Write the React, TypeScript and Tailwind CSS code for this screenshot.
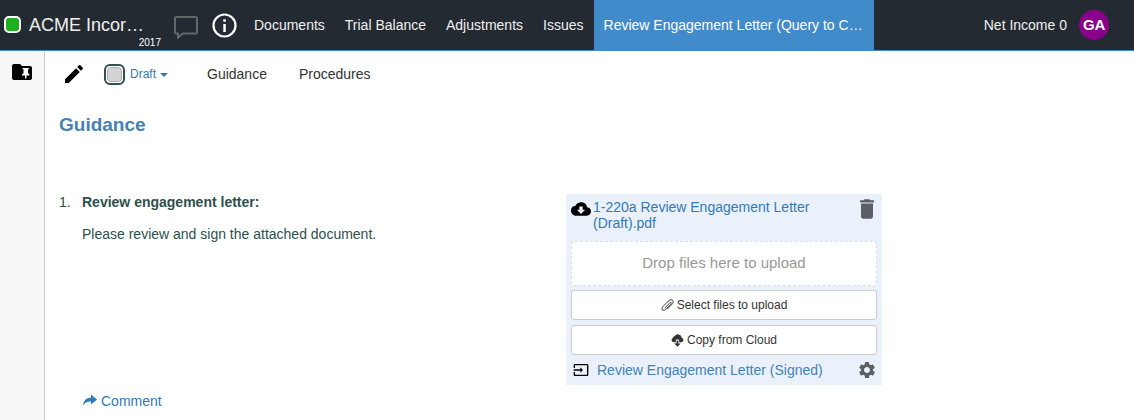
import React from "react";
import { MdEdit, MdCloudDownload, MdDelete, MdSettings, MdInput } from "react-icons/md";

const navItems = ["Documents", "Trial Balance", "Adjustments", "Issues"];

function ChatIcon() {
  return (
    <svg className="mt-[15px] ml-[29px] h-[25px] w-[26px] shrink-0" viewBox="0 0 26 25" fill="none" stroke="#62676b" strokeWidth="2">
      <path d="M3 2H22.500Q24 2 24 3.500V17Q24 18.500 22.500 18.500H10L5 22.500V18.500H3.500Q2 18.500 2 17V3.500Q2 2 3 2Z" />
    </svg>
  );
}

function InfoIcon() {
  return (
    <svg className="mt-[13px] ml-[13px] h-[25px] w-[25px] shrink-0" viewBox="0 0 25 25" fill="none">
      <circle cx="12.500" cy="12.500" r="11" stroke="#fff" strokeWidth="2.200" />
      <path d="M11.300 6.300h2.500v2.500h-2.500zM11.300 11h2.500v8h-2.500z" fill="#fff" />
    </svg>
  );
}

function FolderPinIcon() {
  return (
    <svg className="h-4 w-5" viewBox="0 0 20 16">
      <path d="M2 0H8L10 2H18Q20 2 20 4V14Q20 16 18 16H2Q0 16 0 14V2Q0 0 2 0Z" fill="#000" />
      <path d="M10.500 4H17V5.200H16V9L17.500 10.500V11.500H14.500V14L13.800 15L13.100 14V11.500H10V10.500L11.500 9V5.200H10.500Z" fill="#fff" />
    </svg>
  );
}

function PaperclipIcon() {
  return (
    <svg className="h-[13px] w-[13px]" viewBox="0 0 13 13" fill="none" stroke="#333" strokeWidth=".9" strokeLinecap="round">
      <path d="M4 8.800L8.800 4Q9.700 3.200 10.200 3.700Q10.700 4.300 9.900 5.200L5 10.100Q3.200 12.200 1.500 11.100Q.2 9.700 1.800 7.600L7.300 2.100Q9.600 0 11.400 1Q13 2.300 11.600 4.600L6.500 9.800" />
    </svg>
  );
}

function CloudArrowIcon() {
  return (
    <svg className="h-[13px] w-[13px]" viewBox="0 0 13 13" fill="#333">
      <path d="M3 8.200H4.800V5.500H8.100V8.200H10.200A2.300 2.300 0 0 0 10.700 3.700A3.800 3.800 0 0 0 3.600 2.300A1.800 1.800 0 0 0 1.900 4A2.200 2.200 0 0 0 3 8.200Z" />
      <path d="M5.500 6.400H7.400V9.500H9.700L6.450 12.700L3.200 9.500H5.500Z" />
    </svg>
  );
}

function ReplyArrowIcon() {
  return (
    <svg className="-mt-[2px] h-3 w-[14px]" viewBox="0 0 14 12" fill="#337ab7">
      <path d="M8 .5L14 5.500L8 10.500V7.600C4.300 7.400 1.800 8.600 .2 11.500C.4 6.600 3.400 3.600 8 3.400Z" />
    </svg>
  );
}

function Header() {
  return (
    <header className="flex h-[51px] border-b border-[#428bca] bg-[#232a31] text-[14px] leading-5 text-[#f0f0f0]">
      <div className="mt-4 ml-1 h-[17px] w-[17px] shrink-0 rounded-[5px] border-2 border-white bg-[#20ad20]" />
      <div className="ml-2 w-[115px] shrink-0 pt-[13px]">
        <div className="text-[18px] leading-6 whitespace-nowrap">ACME Incor…</div>
        <div className="-mr-[17px] text-right text-[10px] leading-[11px] text-white">2017</div>
      </div>
      <ChatIcon />
      <InfoIcon />
      <nav className="ml-[7px] flex">
        {navItems.map((item) => (
          <a key={item} className="px-[10px] pt-[15px] whitespace-nowrap">{item}</a>
        ))}
        <a className="h-[51px] w-[280px] truncate bg-[#428bca] px-[10px] pt-[15px] text-white">
          Review Engagement Letter (Query to C…
        </a>
      </nav>
      <div className="ml-auto flex pr-[25px]">
        <span className="pt-[15px]">Net Income 0</span>
        <span className="mt-[10px] ml-3 flex h-[30px] w-[30px] items-center justify-center rounded-full bg-[#8b008b] text-[15px] font-bold tracking-[-0.3px] text-white">GA</span>
      </div>
    </header>
  );
}

function Attachments() {
  return (
    <section className="h-[191px] w-[316px] bg-[#eaf1fa] px-[5px] pt-[5px] text-[#337ab7]">
      <div className="flex h-[42px]">
        <MdCloudDownload className="h-5 w-5 shrink-0 text-black" />
        <a className="ml-[2px] w-[240px] leading-4">1-220a Review Engagement Letter (Draft).pdf</a>
        <MdDelete className="-mt-[3px] -mr-[2px] ml-auto h-[26px] w-6 text-[#5c6064]" preserveAspectRatio="none" />
      </div>
      <div className="flex h-[45px] items-center justify-center rounded border border-dashed border-[#dcdfe3] bg-white pb-[2px] text-[15px] text-[#999]">
        Drop files here to upload
      </div>
      <button className="mt-1 flex h-[30px] w-full items-center justify-center gap-[3px] rounded-[3px] border border-[#ccc] bg-white text-[12px] text-[#333]">
        <PaperclipIcon />
        Select files to upload
      </button>
      <button className="mt-[5px] flex h-[30px] w-full items-center justify-center gap-[3px] rounded-[3px] border border-[#ccc] bg-white text-[12px] text-[#333]">
        <CloudArrowIcon />
        Copy from Cloud
      </button>
      <div className="flex h-[30px] items-center">
        <MdInput className="ml-[2px] h-4 w-4 text-black" />
        <a className="ml-2 text-[#4682b4]">Review Engagement Letter (Signed)</a>
        <MdSettings className="ml-auto h-5 w-5 text-[#5c6064]" />
      </div>
    </section>
  );
}

export default function App() {
  return (
    <div className="flex h-[420px] w-full flex-col overflow-hidden bg-white font-['Liberation_Sans',Arial,sans-serif] text-[14px] leading-5">
      <Header />
      <div className="flex flex-1">
        <aside className="w-[45px] shrink-0 border-r border-[#ccc] bg-[#f7f7f7] pt-[13px] pl-3">
          <FolderPinIcon />
        </aside>
        <main className="flex-1">
          <div className="flex h-[46px] items-center pl-[17px] text-[#333]">
            <MdEdit className="h-6 w-6 text-black" />
            <div className="ml-[18px] flex h-[21px] w-[21px] items-center justify-center rounded-[6px] border-2 border-[#2f4f4f]">
              <div className="h-[15px] w-[15px] rounded-[4px] border border-[#aaa] bg-[#d3d3d3]" />
            </div>
            <span className="ml-[5px] text-[12px] text-[#337ab7]">Draft</span>
            <svg className="mt-[2px] ml-1 h-1 w-2" viewBox="0 0 8 4"><path d="M0 0h8L4 4z" fill="#337ab7" /></svg>
            <a className="ml-[39px]">Guidance</a>
            <a className="ml-8">Procedures</a>
          </div>
          <h1 className="mt-4 ml-[14px] text-[19px] leading-6 font-bold text-[#4682b4]">Guidance</h1>
          <div className="mt-[57px] flex h-[191px]">
            <div className="-mt-[2px] flex w-[521px] pl-[14px] text-[#2f4f4f]">
              <span className="w-[23px] shrink-0">1.</span>
              <div>
                <p className="font-bold">Review engagement letter:</p>
                <p className="mt-3">Please review and sign the attached document.</p>
              </div>
            </div>
            <Attachments />
          </div>
          <a className="mt-[6px] ml-[38px] flex items-center gap-1 text-[#337ab7]">
            <ReplyArrowIcon />
            Comment
          </a>
        </main>
      </div>
    </div>
  );
}
